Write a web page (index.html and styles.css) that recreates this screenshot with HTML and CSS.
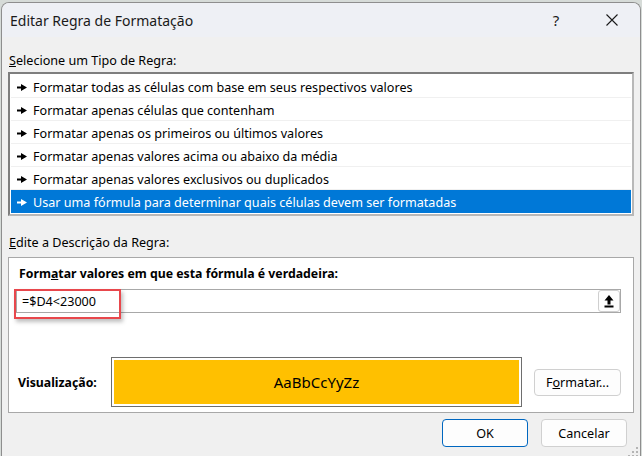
FILE: index.html
```html
<!DOCTYPE html>
<html lang="pt-BR">
<head>
  <meta charset="UTF-8" />
  <title>Editar Regra de Formatação</title>
  <link rel="stylesheet" href="styles.css">
</head>
<body>
  <div class="dialog">
    <div class="titlebar">
      <span class="title">Editar Regra de Formatação</span>
      <span class="help">?</span>
      <span class="close">
        <svg width="12" height="12" viewBox="0 0 12 12"><path d="M0.5 0.5L11.5 11.5M11.5 0.5L0.5 11.5" stroke="#1a1a1a" stroke-width="1.1"/></svg>
      </span>
    </div>

    <div class="content">
      <div class="label"><u>S</u>elecione um Tipo de Regra:</div>
      <div class="rule-list">
        <div class="rule"><svg class="arrow" width="10" height="7" viewBox="0 0 10 7"><path d="M0 2.5h4V0l6 3.5-6 3.5V4.5H0z"/></svg>Formatar todas as células com base em seus respectivos valores</div>
        <div class="rule"><svg class="arrow" width="10" height="7" viewBox="0 0 10 7"><path d="M0 2.5h4V0l6 3.5-6 3.5V4.5H0z"/></svg>Formatar apenas células que contenham</div>
        <div class="rule"><svg class="arrow" width="10" height="7" viewBox="0 0 10 7"><path d="M0 2.5h4V0l6 3.5-6 3.5V4.5H0z"/></svg>Formatar apenas os primeiros ou últimos valores</div>
        <div class="rule"><svg class="arrow" width="10" height="7" viewBox="0 0 10 7"><path d="M0 2.5h4V0l6 3.5-6 3.5V4.5H0z"/></svg>Formatar apenas valores acima ou abaixo da média</div>
        <div class="rule"><svg class="arrow" width="10" height="7" viewBox="0 0 10 7"><path d="M0 2.5h4V0l6 3.5-6 3.5V4.5H0z"/></svg>Formatar apenas valores exclusivos ou duplicados</div>
        <div class="rule selected"><svg class="arrow" width="10" height="7" viewBox="0 0 10 7"><path d="M0 2.5h4V0l6 3.5-6 3.5V4.5H0z"/></svg>Usar uma fórmula para determinar quais células devem ser formatadas</div>
      </div>

      <div class="label second"><u>E</u>dite a Descrição da Regra:</div>
      <div class="panel">
        <div class="panel-title">Form<u>a</u>tar valores em que esta fórmula é verdadeira:</div>
        <div class="formula">
          <span class="formula-text">=$D4&lt;23000</span>
          <span class="collapse-btn">
            <svg width="10" height="13" viewBox="0 0 10 13"><path d="M5 0L9.5 5.5H6.5V9.5H3.5V5.5H0.5z" fill="#000"/><rect x="0.5" y="10.5" width="9" height="2" fill="#000"/></svg>
          </span>
          <span class="highlight"></span>
        </div>
        <div class="preview-row">
          <span class="preview-label">Visualização:</span>
          <div class="preview"><span>AaBbCcYyZz</span></div>
          <span class="btn format-btn">F<u>o</u>rmatar...</span>
        </div>
      </div>
    </div>

    <div class="actions">
      <span class="btn ok">OK</span>
      <span class="btn">Cancelar</span>
    </div>

    <svg class="grip" width="10" height="10" viewBox="0 0 10 10" fill="#b4b4b4">
      <rect x="8" y="0" width="2" height="2"/>
      <rect x="4" y="4" width="2" height="2"/><rect x="8" y="4" width="2" height="2"/>
      <rect x="0" y="8" width="2" height="2"/><rect x="4" y="8" width="2" height="2"/><rect x="8" y="8" width="2" height="2"/>
    </svg>
  </div>
</body>
</html>
```

FILE: styles.css
```css
body {
  margin: 0;
  background: #d6dbd8;
  font-family: "Noto Sans", "Open Sans", sans-serif;
  font-size: 12.6px;
  color: #000;
  overflow: hidden;
}
.dialog {
  position: relative;
  box-sizing: border-box;
  width: 640px;
  height: 460px;
  margin: 2px 0 0 1px;
  border: 1px solid #8e8e8e;
  border-bottom: none;
  border-radius: 8px 8px 0 0;
  background: #f0f0f0;
  overflow: hidden;
}
.titlebar {
  display: flex;
  align-items: center;
  height: 34px;
  padding-left: 8px;
  background: #eef0f5;
}
.title {
  flex: 1;
  font-size: 14px;
  color: #1a1a1a;
}
.help {
  width: 20px;
  margin-right: 23px;
  text-align: center;
  font-size: 15px;
  color: #1a1a1a;
}
.close {
  display: flex;
  justify-content: center;
  width: 46px;
  margin-right: 5px;
}
.content {
  padding: 0 6px;
}
.label {
  height: 18px;
  line-height: 18px;
  margin-top: 15px;
  padding-left: 1px;
}
.label.second {
  margin-top: 18px;
}
.rule-list {
  margin-top: 2px;
  border: 2px solid #7e7e7e;
  border-right-color: #b8b8b8;
  border-bottom-color: #b8b8b8;
  padding: 1px 1px 1px;
  background: #fff;
}
.rule {
  display: flex;
  align-items: center;
  box-sizing: border-box;
  height: 23px;
  padding: 2px 0 0 6px;
  border-bottom: 1px solid #f0f0f0;
  white-space: nowrap;
}
.rule .arrow {
  margin-right: 6px;
  fill: #000;
}
.rule.selected {
  border-bottom: none;
  background: #0078d7;
  color: #fff;
}
.rule.selected .arrow {
  fill: #fff;
}
.panel {
  margin-top: 5px;
  border: 1px solid #a8a8a8;
  background: #fff;
  padding: 7px 12px 5px 7px;
}
.panel-title {
  height: 18px;
  line-height: 18px;
  padding-left: 3px;
  font-size: 12.3px;
  font-weight: bold;
}
.formula {
  position: relative;
  display: flex;
  align-items: center;
  box-sizing: border-box;
  height: 24px;
  margin-top: 6px;
  border: 1px solid #a8a8a8;
  padding-left: 5px;
}
.formula-text {
  flex: 1;
}
.collapse-btn {
  display: flex;
  align-items: center;
  justify-content: center;
  box-sizing: border-box;
  width: 22px;
  height: 22px;
  border: 1px solid #cfcfcf;
  border-radius: 3px;
  background: #fdfdfd;
}
.highlight {
  position: absolute;
  left: -3px;
  top: -1px;
  width: 103px;
  height: 26px;
  border: 2px solid #e8474c;
  box-shadow: 2px 3px 4px rgba(0, 0, 0, 0.25);
}
.preview-row {
  display: flex;
  align-items: center;
  margin-top: 44px;
}
.preview-label {
  width: 93px;
  padding-left: 2px;
  font-size: 12.3px;
  font-weight: bold;
}
.preview {
  flex: 1;
  box-sizing: border-box;
  height: 50px;
  border: 1px solid #6e6e6e;
  padding: 2px;
  background: #fff;
}
.preview span {
  display: flex;
  align-items: center;
  justify-content: center;
  height: 100%;
  background: #ffc000;
  font-size: 15px;
}
.btn {
  display: flex;
  align-items: center;
  justify-content: center;
  box-sizing: border-box;
  width: 86px;
  height: 28px;
  border: 1px solid #d0d0d0;
  border-radius: 4px;
  background: #fdfdfd;
}
.format-btn {
  width: 87px;
  height: 27px;
  margin-left: 12px;
}
.actions {
  display: flex;
  justify-content: flex-end;
  gap: 13px;
  margin-top: 6px;
  padding-right: 13px;
}
.btn.ok {
  border-color: #0067c0;
}
.grip {
  position: absolute;
  right: 2px;
  top: 444px;
}
```
